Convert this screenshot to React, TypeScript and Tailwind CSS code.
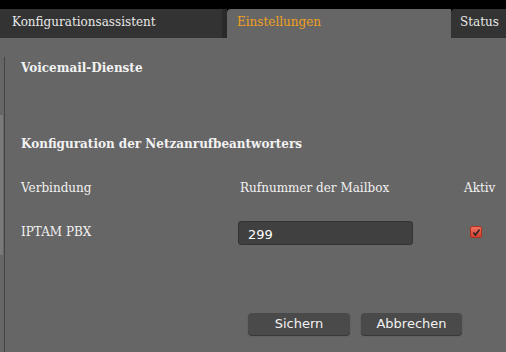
export default function App() {
  return (
    <div className="w-[506px] h-[352px] overflow-hidden bg-black font-['DejaVu_Serif',serif] text-[12px]">
      <div className="h-[9px]" />
      <div className="flex h-[29px]">
        <div className="w-[227px] bg-[#333] pl-3 pt-[4px] text-[#e8e8e8] border-r-[5px] border-[#2a2a2a]">Konfigurationsassistent</div>
        <div className="w-[224px] bg-[#666] rounded-tl-[4px] pl-[10px] pt-[4px] text-[#f0a020]">Einstellungen</div>
        <div className="flex-1 bg-[#333] rounded-tl-[4px] pl-[9px] pt-[4px] text-[#e8e8e8]">Status</div>
      </div>
      <div className="flex h-[314px] bg-[#666]">
        <div className="w-[4px] flex flex-col">
          <div className="h-[77px]" />
          <div className="h-[140px] w-[3px] bg-[#7a7a7a]" />
        </div>
        <div className="flex-1 border-l border-[#444] mt-[19px] pl-4 text-[#f2f2f2]">
          <div className="pt-[2px] font-bold">Voicemail-Dienste</div>
          <div className="mt-[58px] font-bold">Konfiguration der Netzanrufbeantworters</div>
          <div className="mt-[26px] flex">
            <div className="w-[219px]">Verbindung</div>
            <div className="w-[224px]">Rufnummer der Mailbox</div>
            <div>Aktiv</div>
          </div>
          <div className="mt-[24px] flex items-start">
            <div className="w-[217px] pt-[2px]">IPTAM PBX</div>
            <div className="w-[175px] h-[24px] rounded-[3px] bg-[#404040] border border-[#333] pl-[9px] pt-[3px] font-['DejaVu_Sans',sans-serif] text-[13px] text-white">299</div>
            <div className="ml-[57px] mt-[5px] w-[12px] h-[12px] rounded-[2px] bg-gradient-to-b from-[#f07060] to-[#d04030] border border-[#b03020] flex items-center justify-center">
              <svg width="9" height="9" viewBox="0 0 9 9"><path d="M1.5 4.5 L3.5 7 L7.5 1.5" fill="none" stroke="#222" strokeWidth="1.5" /></svg>
            </div>
          </div>
          <div className="mt-[68px] flex pl-[227px] gap-[11px] font-['DejaVu_Sans',sans-serif] text-[13px] text-[#f2f2f2]">
            <button className="w-[102px] h-[22px] rounded-[4px] bg-[#4a4a4a] shadow-[0_1px_1px_#333]">Sichern</button>
            <button className="w-[101px] h-[22px] rounded-[4px] bg-[#4a4a4a] shadow-[0_1px_1px_#333]">Abbrechen</button>
          </div>
        </div>
      </div>
    </div>
  );
}
